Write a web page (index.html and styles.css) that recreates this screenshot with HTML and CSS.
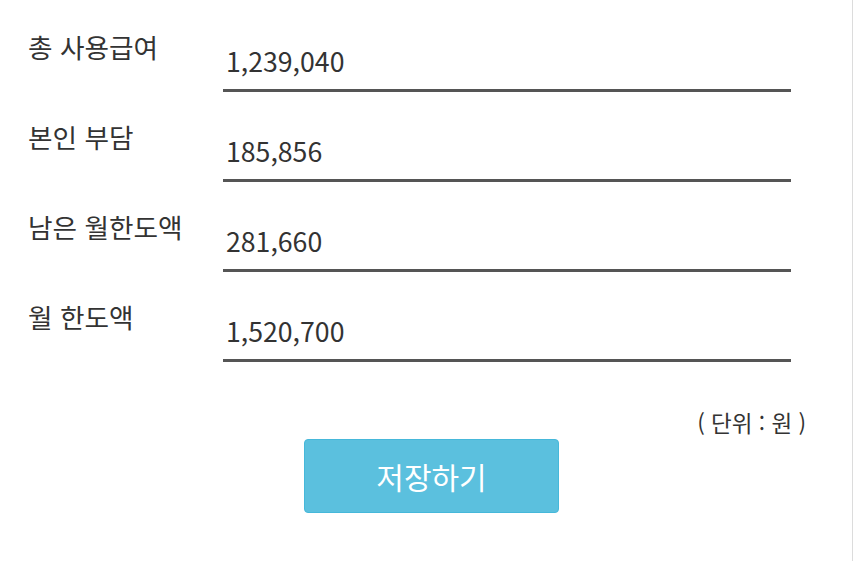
FILE: index.html
```html
<!DOCTYPE html>
<html lang="ko">
<head>
<meta charset="utf-8">
<title>월 한도액</title>
<link rel="stylesheet" href="styles.css">
</head>
<body>
<div class="page">
  <form class="form">
    <div class="row">
      <label class="label">총 사용급여</label>
      <input class="field" type="text" value="1,239,040" readonly>
    </div>
    <div class="row">
      <label class="label">본인 부담</label>
      <input class="field" type="text" value="185,856" readonly>
    </div>
    <div class="row">
      <label class="label">남은 월한도액</label>
      <input class="field" type="text" value="281,660" readonly>
    </div>
    <div class="row">
      <label class="label">월 한도액</label>
      <input class="field" type="text" value="1,520,700" readonly>
    </div>
    <div class="unit">( 단위 : 원 )</div>
    <div class="actions">
      <button class="save" type="button">저장하기</button>
    </div>
  </form>
</div>
</body>
</html>
```
FILE: styles.css
```css
html, body {
  margin: 0;
  padding: 0;
  background: #fff;
}
body {
  font-family: "Noto Sans CJK KR", "Noto Sans", sans-serif;
  color: #333;
}
.page {
  width: 852px;
  height: 561px;
  border-right: 1px solid #dcdcdc;
  padding-top: 2px;
  box-sizing: content-box;
}
.form {
  width: 778px;
  padding-left: 28px;
  margin: 0;
}
.row {
  display: flex;
  align-items: flex-end;
  height: 90px;
}
.label {
  align-self: flex-start;
  width: 195px;
  flex: none;
  font-size: 26.67px;
  line-height: 36px;
  margin-top: 27px;
}
.field {
  width: 568px;
  height: 50px;
  box-sizing: border-box;
  border: 0;
  border-bottom: 3px solid #555;
  padding: 0 0 10px 3px;
  margin: 0;
  font-family: inherit;
  font-size: 26.67px;
  color: #333;
  background: transparent;
  outline: none;
}
.unit {
  margin-top: 46px;
  text-align: right;
  font-size: 22.5px;
  line-height: 29px;
}
.actions {
  display: flex;
  margin-top: 2px;
  padding-left: 276px;
}
.save {
  width: 255px;
  height: 74px;
  box-sizing: border-box;
  background: #5bc0de;
  border: 1px solid #46b8da;
  border-radius: 4px;
  color: #fff;
  font-family: inherit;
  font-size: 30px;
  padding: 0;
}
```
